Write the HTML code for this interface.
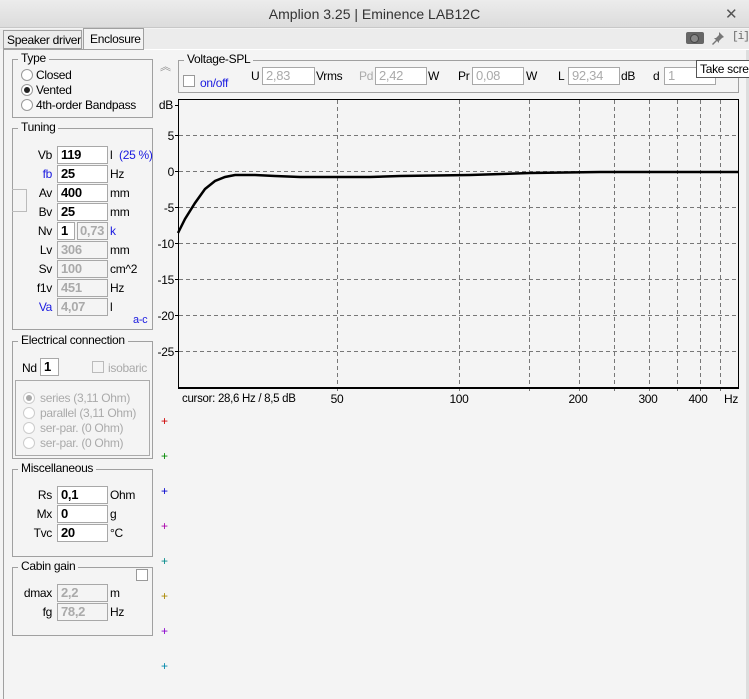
<!DOCTYPE html>
<html><head><meta charset="utf-8"><style>
*{margin:0;padding:0;box-sizing:border-box}
body{width:749px;height:699px;background:#f4f4f4;font-family:"Liberation Sans",sans-serif;font-size:12px;letter-spacing:-0.3px;color:#000;position:relative;overflow:hidden}
.a{position:absolute;white-space:nowrap}
.tb{position:absolute;left:0;top:0;width:749px;height:28px;background:linear-gradient(#ececec,#dcdcdc);border-bottom:1px solid #c8c8c8}
.g{position:absolute;border:1px solid #a0a0a0}
.gl{position:absolute;background:#f4f4f4;padding:0 3px;top:-9px;left:5px;font-size:12px}
.in{position:absolute;height:18px;border:1px solid #a8a8a8;background:#fff;font-weight:bold;font-size:13px;padding-left:3px;line-height:16px}
.dis{color:#aaa;background:#f4f4f4}
.lb{position:absolute;text-align:right;width:40px;font-size:12px}
.rd{position:absolute;width:12px;height:12px;border-radius:50%;border:1px solid #999;background:#fff}
.blue{color:#1a1ae0}
</style></head><body>
<div class="tb"></div>
<div class="a" style="left:0;width:749px;top:6px;text-align:center;font-size:14px;color:#333;letter-spacing:0">Amplion 3.25 | Eminence LAB12C</div>
<div class="a" style="left:725px;top:5px;font-size:15px;color:#555">✕</div>
<div class="a" style="left:0;top:29px;width:749px;height:20px;background:#ececec"></div>
<div class="a" style="left:3px;top:30px;width:79px;height:19px;border:1px solid #a0a0a0;background:#ececec;padding:2px 0 0 3px;overflow:hidden">Speaker driver</div>
<div class="a" style="left:83px;top:28px;width:61px;height:22px;border:1px solid #a0a0a0;border-bottom:none;background:#f4f4f4;padding:3px 0 0 6px">Enclosure</div>
<div class="a" style="left:3px;top:49px;width:745px;height:1px;background:#a0a0a0"></div>
<div class="a" style="left:144px;top:49px;width:605px;height:1px;background:#fff"></div>
<div class="a" style="left:686px;top:32px;width:18px;height:12px;background:#666;border-radius:2px"></div>
<div class="a" style="left:690px;top:34px;width:9px;height:9px;background:#888;border-radius:50%;border:1px solid #444"></div>
<svg class="a" style="left:710px;top:30px" width="16" height="16"><path d="M9 2 L14 7 L12 8 L9 11 L9 13 L7 11 L3 15 L2 14 L6 10 L4 8 L6 8 L9 5 Z" fill="#777"/></svg>
<div class="a" style="left:732px;top:31px;font-size:11px;color:#666;font-family:'Liberation Mono',monospace;letter-spacing:-1px">[i]</div>
<div class="a" style="left:3px;top:50px;width:1px;height:649px;background:#a0a0a0"></div>

<!-- Type -->
<div class="g" style="left:12px;top:59px;width:141px;height:59px"><div class="gl">Type</div></div>
<div class="rd" style="left:21px;top:69px"></div><div class="a" style="left:36px;top:68px">Closed</div>
<div class="rd" style="left:21px;top:84px"></div><div class="a" style="left:24px;top:87px;width:6px;height:6px;border-radius:50%;background:#222"></div><div class="a" style="left:36px;top:83px">Vented</div>
<div class="rd" style="left:21px;top:99px"></div><div class="a" style="left:36px;top:98px">4th-order Bandpass</div>

<!-- Tuning -->
<div class="g" style="left:12px;top:128px;width:141px;height:202px"><div class="gl">Tuning</div></div>
<div class="a" style="left:12px;top:189px;width:15px;height:23px;border:1px solid #bbb;border-left:none"></div>
<div class="lb" style="left:12px;top:148px">Vb</div><div class="in" style="left:57px;top:146px;width:51px">119</div><div class="a" style="left:110px;top:148px">l</div><div class="a blue" style="left:119px;top:148px">(25 %)</div>
<div class="lb blue" style="left:12px;top:167px">fb</div><div class="in" style="left:57px;top:165px;width:51px">25</div><div class="a" style="left:110px;top:167px">Hz</div>
<div class="lb" style="left:12px;top:186px">Av</div><div class="in" style="left:57px;top:184px;width:51px">400</div><div class="a" style="left:110px;top:186px">mm</div>
<div class="lb" style="left:12px;top:205px">Bv</div><div class="in" style="left:57px;top:203px;width:51px">25</div><div class="a" style="left:110px;top:205px">mm</div>
<div class="lb" style="left:12px;top:224px">Nv</div><div class="in" style="left:57px;top:222px;width:18px">1</div><div class="in dis" style="left:77px;top:222px;width:31px;padding-left:2px">0,73</div><div class="a blue" style="left:110px;top:224px">k</div>
<div class="lb" style="left:12px;top:243px">Lv</div><div class="in dis" style="left:57px;top:241px;width:51px">306</div><div class="a" style="left:110px;top:243px">mm</div>
<div class="lb" style="left:12px;top:262px">Sv</div><div class="in dis" style="left:57px;top:260px;width:51px">100</div><div class="a" style="left:110px;top:262px">cm^2</div>
<div class="lb" style="left:12px;top:281px">f1v</div><div class="in dis" style="left:57px;top:279px;width:51px">451</div><div class="a" style="left:110px;top:281px">Hz</div>
<div class="lb blue" style="left:12px;top:300px">Va</div><div class="in dis" style="left:57px;top:298px;width:51px">4,07</div><div class="a" style="left:110px;top:300px">l</div>
<div class="a blue" style="left:133px;top:314px;font-size:11px">a-c</div>

<!-- Electrical -->
<div class="g" style="left:12px;top:341px;width:141px;height:118px"><div class="gl">Electrical connection</div></div>
<div class="a" style="left:22px;top:361px">Nd</div><div class="in" style="left:40px;top:358px;width:19px">1</div>
<div class="a" style="left:92px;top:361px;width:12px;height:12px;border:1px solid #bbb"></div><div class="a" style="left:108px;top:361px;color:#aaa">isobaric</div>
<div class="g" style="left:15px;top:380px;width:135px;height:76px;border-color:#aaa"></div>
<div class="rd" style="left:23px;top:392px;border-color:#ccc"></div><div class="a" style="left:26px;top:395px;width:6px;height:6px;border-radius:50%;background:#aaa"></div><div class="a" style="left:40px;top:391px;color:#aaa">series (3,11 Ohm)</div>
<div class="rd" style="left:23px;top:407px;border-color:#ccc"></div><div class="a" style="left:40px;top:406px;color:#aaa">parallel (3,11 Ohm)</div>
<div class="rd" style="left:23px;top:422px;border-color:#ccc"></div><div class="a" style="left:40px;top:421px;color:#aaa">ser-par. (0 Ohm)</div>
<div class="rd" style="left:23px;top:437px;border-color:#ccc"></div><div class="a" style="left:40px;top:436px;color:#aaa">ser-par. (0 Ohm)</div>

<!-- Misc -->
<div class="g" style="left:12px;top:469px;width:141px;height:88px"><div class="gl">Miscellaneous</div></div>
<div class="lb" style="left:12px;top:488px">Rs</div><div class="in" style="left:57px;top:486px;width:51px">0,1</div><div class="a" style="left:110px;top:488px">Ohm</div>
<div class="lb" style="left:12px;top:507px">Mx</div><div class="in" style="left:57px;top:505px;width:51px">0</div><div class="a" style="left:110px;top:507px">g</div>
<div class="lb" style="left:12px;top:526px">Tvc</div><div class="in" style="left:57px;top:524px;width:51px">20</div><div class="a" style="left:110px;top:526px">°C</div>

<!-- Cabin -->
<div class="g" style="left:12px;top:567px;width:141px;height:69px"><div class="gl">Cabin gain</div></div>
<div class="a" style="left:136px;top:569px;width:12px;height:12px;border:1px solid #999;background:#fff"></div>
<div class="lb" style="left:12px;top:586px">dmax</div><div class="in dis" style="left:57px;top:584px;width:51px">2,2</div><div class="a" style="left:110px;top:586px">m</div>
<div class="lb" style="left:12px;top:605px">fg</div><div class="in dis" style="left:57px;top:603px;width:51px">78,2</div><div class="a" style="left:110px;top:605px">Hz</div>

<!-- markers -->
<div class="a" style="left:161px;top:414px;color:#c00">+</div>
<div class="a" style="left:161px;top:449px;color:#080">+</div>
<div class="a" style="left:161px;top:484px;color:#00c">+</div>
<div class="a" style="left:161px;top:519px;color:#a0a">+</div>
<div class="a" style="left:161px;top:554px;color:#088">+</div>
<div class="a" style="left:161px;top:589px;color:#a80">+</div>
<div class="a" style="left:161px;top:624px;color:#80c">+</div>
<div class="a" style="left:161px;top:659px;color:#08a">+</div>

<!-- Voltage-SPL -->
<div class="a" style="left:160px;top:58px;color:#888;font-size:11px">︽</div>
<div class="g" style="left:178px;top:60px;width:561px;height:33px"><div class="gl">Voltage-SPL</div></div>
<div class="a" style="left:183px;top:75px;width:12px;height:12px;border:1px solid #999;background:#fff"></div>
<div class="a blue" style="left:200px;top:76px">on/off</div>
<div class="a" style="left:251px;top:69px">U</div><div class="in dis" style="left:262px;top:67px;width:53px;font-weight:normal;background:#fff">2,83</div><div class="a" style="left:316px;top:69px">Vrms</div>
<div class="a" style="left:359px;top:69px;color:#aaa">Pd</div><div class="in dis" style="left:375px;top:67px;width:52px;font-weight:normal;background:#fff">2,42</div><div class="a" style="left:428px;top:69px">W</div>
<div class="a" style="left:458px;top:69px">Pr</div><div class="in dis" style="left:472px;top:67px;width:52px;font-weight:normal;background:#fff">0,08</div><div class="a" style="left:526px;top:69px">W</div>
<div class="a" style="left:558px;top:69px">L</div><div class="in dis" style="left:568px;top:67px;width:52px;font-weight:normal;background:#fff">92,34</div><div class="a" style="left:621px;top:69px">dB</div>
<div class="a" style="left:653px;top:69px">d</div><div class="in dis" style="left:664px;top:67px;width:52px;font-weight:normal;background:#fff">1</div>
<div class="a" style="left:696px;top:60px;width:60px;height:18px;background:#fff;border:1px solid #555;padding:1px 0 0 3px;z-index:3">Take scree</div>
<div class="a" style="left:746px;top:50px;width:3px;height:649px;background:#ddd"></div>

<svg class="a" style="left:0;top:0" width="749" height="699">
<g stroke="#777" stroke-dasharray="4,3" stroke-width="1">
<line x1="179" y1="135.5" x2="738" y2="135.5"/><line x1="179" y1="171.5" x2="738" y2="171.5"/><line x1="179" y1="207.5" x2="738" y2="207.5"/><line x1="179" y1="243.5" x2="738" y2="243.5"/><line x1="179" y1="279.5" x2="738" y2="279.5"/><line x1="179" y1="315.5" x2="738" y2="315.5"/><line x1="179" y1="351.5" x2="738" y2="351.5"/>
<line x1="337.5" y1="100" x2="337.5" y2="392"/><line x1="459.5" y1="100" x2="459.5" y2="392"/><line x1="529.5" y1="100" x2="529.5" y2="392"/><line x1="579.5" y1="100" x2="579.5" y2="392"/><line x1="614.5" y1="100" x2="614.5" y2="392"/><line x1="649.5" y1="100" x2="649.5" y2="392"/><line x1="677.5" y1="100" x2="677.5" y2="392"/><line x1="700.5" y1="100" x2="700.5" y2="392"/><line x1="720.5" y1="100" x2="720.5" y2="392"/>
</g>
<rect x="178.5" y="99.5" width="560" height="288" fill="none" stroke="#000"/>
<line x1="178" y1="388" x2="739" y2="388" stroke="#000" stroke-width="2"/>
<g stroke="#000"><line x1="175" y1="105.5" x2="178" y2="105.5"/><line x1="175" y1="135.5" x2="178" y2="135.5"/><line x1="175" y1="171.5" x2="178" y2="171.5"/><line x1="175" y1="207.5" x2="178" y2="207.5"/><line x1="175" y1="243.5" x2="178" y2="243.5"/><line x1="175" y1="279.5" x2="178" y2="279.5"/><line x1="175" y1="315.5" x2="178" y2="315.5"/><line x1="175" y1="351.5" x2="178" y2="351.5"/></g>
<polyline fill="none" stroke="#000" stroke-width="2.5" points="178,233 185,219 195,203 205,189 215,181 225,177 235,175 255,175 275,176 300,177 370,177 400,176 470,175 530,173 600,172 738,172"/>
<g font-family="Liberation Sans" font-size="12" fill="#000" text-anchor="end" letter-spacing="-0.3">
<text x="173" y="109">dB</text><text x="174" y="140">5</text><text x="174" y="176">0</text><text x="174" y="212">-5</text><text x="174" y="248">-10</text><text x="174" y="284">-15</text><text x="174" y="320">-20</text><text x="174" y="356">-25</text></g>
<g font-family="Liberation Sans" font-size="12" fill="#000" text-anchor="middle" letter-spacing="-0.3">
<text x="337" y="403">50</text><text x="459" y="403">100</text><text x="578" y="403">200</text><text x="648" y="403">300</text><text x="698" y="403">400</text><text x="731" y="403">Hz</text></g>
<text x="182" y="402" font-family="Liberation Sans" font-size="11.5" letter-spacing="-0.3">cursor: 28,6 Hz / 8,5 dB</text>
</svg>
</body></html>
